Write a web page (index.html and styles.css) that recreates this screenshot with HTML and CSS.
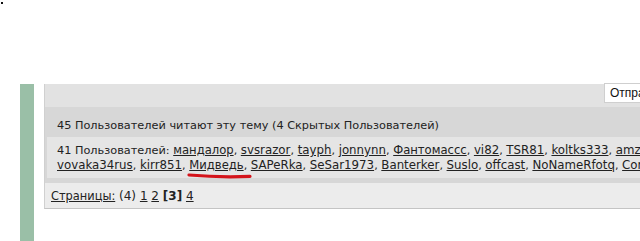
FILE: index.html
```html
<!DOCTYPE html>
<html lang="ru">
<head>
<meta charset="utf-8">
<link rel="stylesheet" href="styles.css">
</head>
<body>
<div class="top"><span class="dot"></span></div>
<div class="frame">
  <div class="sidebar"></div>
  <div class="panel">
    <div class="panel-head">
      <button class="send">Отправить</button>
    </div>
    <div class="readers">
      <div class="readers-title">45 Пользователей читают эту тему (4 Скрытых Пользователей)</div>
      <div class="readers-list">
        <div class="line">41 Пользователей: <a href="#" class="cy">мандалор</a>, <a href="#">svsrazor</a>, <a href="#">tayph</a>, <a href="#">jonnynn</a>, <a href="#" class="cy">Фантомассс</a>, <a href="#">vi82</a>, <a href="#">TSR81</a>, <a href="#">koltks333</a>, <a href="#">amzor</a>, <a href="#">Aleks</a></div>
        <div class="line"><a href="#">vovaka34rus</a>, <a href="#">kirr851</a>, <span class="mark"><a href="#" class="cy">Мидведь</a>,<svg class="stroke" width="66" height="8" viewBox="0 0 66 8"><path d="M2 3 C20 4.6 44 5.2 63 4.4" stroke="#d4141b" stroke-width="3.2" stroke-linecap="round" fill="none"/></svg></span> <a href="#">SAPeRka</a>, <a href="#">SeSar1973</a>, <a href="#">Banterker</a>, <a href="#">Suslo</a>, <a href="#">offcast</a>, <a href="#">NoNameRfotq</a>, <a href="#">Conrad</a>, <a href="#">Igor</a></div>
      </div>
    </div>
    <div class="pages"><a href="#" class="cy">Страницы:</a> (4) <a href="#">1</a> <a href="#">2</a> <b>[3]</b> <a href="#">4</a></div>
  </div>
</div>
</body>
</html>
```
FILE: styles.css
```css
html, body {
  margin: 0;
  padding: 0;
  overflow: hidden;
  background: #ffffff;
  width: 640px;
  height: 241px;
}
.top {
  height: 84px;
  position: relative;
}
.dot {
  position: absolute;
  left: 1px;
  top: 2px;
  width: 2px;
  height: 2px;
  background: #111;
}
.frame {
  display: flex;
  height: 157px;
  padding-left: 20px;
}
.sidebar {
  width: 14px;
  flex: none;
  background: #9abfa7;
}
.panel {
  margin-left: 10px;
  width: 900px;
  flex: none;
  align-self: flex-start;
  background: #e2e2e2;
  border-left: 1px solid #d0d0d0;
  border-bottom: 1px solid #c4c4c4;
  font-family: "DejaVu Sans", Verdana, sans-serif;
  font-size: 11.3px;
  line-height: 14px;
  color: #222;
}
.panel-head {
  height: 23px;
  display: flex;
  align-items: flex-start;
}
.send {
  margin-left: 559px;
  margin-top: -1px;
  height: 20px;
  padding: 0 5px;
  background: #fff;
  border: 1px solid #cfcfcf;
  border-radius: 0;
  font-family: "Liberation Sans", Arial, sans-serif;
  font-size: 12px;
  color: #111;
}
.readers {
  background: #d7d7d7;
  padding: 12px 0 5px 1px;
}
.readers-title {
  padding-left: 11px;
  margin-bottom: 4px;
}
.readers-list {
  background: #e5e5e5;
  margin: 0 2px 0 1px;
  padding: 6px 0 5px 10px;
}
.line {
  white-space: nowrap;
}
a {
  color: #222;
  text-decoration: underline;
  font-size: 11.8px;
}
a.cy {
  font-size: 11.6px;
}
.mark {
  position: relative;
}
.stroke {
  position: absolute;
  left: -2px;
  top: 13px;
}
.pages {
  background: #ececec;
  padding: 6px 0 5px 6px;
  font-size: 12px;
}
.pages a {
  font-size: 12px;
}
.pages a.cy {
  font-size: 11.4px;
}
.pages b {
  font-weight: bold;
}
```
